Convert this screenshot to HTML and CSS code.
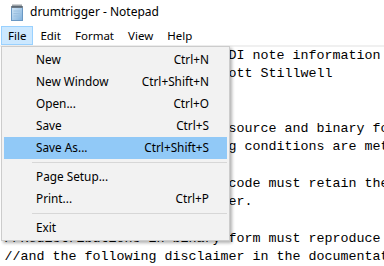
FILE: index.html
```html
<!DOCTYPE html>
<html>
<head>
<meta charset="utf-8">
<title>drumtrigger - Notepad</title>
<link rel="stylesheet" href="styles.css">
</head>
<body>
<div class="window">
  <div class="titlebar">
    <svg class="app-icon" width="14" height="17" viewBox="0 0 14 17">
      <defs>
        <linearGradient id="pg" x1="0" y1="0" x2="1" y2="1">
          <stop offset="0" stop-color="#d6e9f8"/>
          <stop offset="1" stop-color="#7fb0dc"/>
        </linearGradient>
      </defs>
      <rect x="1.5" y="2.5" width="11" height="14" fill="url(#pg)" stroke="#6a98c4"/>
      <line x1="3.5" y1="7" x2="10.5" y2="7" stroke="#9cc0e0"/>
      <line x1="3.5" y1="9.5" x2="10.5" y2="9.5" stroke="#9cc0e0"/>
      <line x1="3.5" y1="12" x2="10.5" y2="12" stroke="#9cc0e0"/>
      <rect x="1" y="2" width="12" height="2" fill="#7a8794"/>
      <g fill="none" stroke="#3f4a55" stroke-width="1">
        <path d="M3 0.5v3"/><path d="M5 0.5v3"/><path d="M7 0.5v3"/><path d="M9 0.5v3"/><path d="M11 0.5v3"/>
      </g>
    </svg>
    <span class="title">drumtrigger - Notepad</span>
  </div>
  <div class="menubar">
    <span class="mb-item active">File</span>
    <span class="mb-item">Edit</span>
    <span class="mb-item">Format</span>
    <span class="mb-item">View</span>
    <span class="mb-item">Help</span>
  </div>
  <div class="band"></div>
  <div class="editor">//Translates drum hits to MIDI note information
//Copyright (c) 2015-2017 Scott Stillwell


//Redistribution and use in source and binary forms, with or without
//provided that the following conditions are met:

//Redistributions of source code must retain the above copyright
//this list and the disclaimer.

//Redistributions in binary form must reproduce the above copyright
//and the following disclaimer in the documentation and/or other materials</div>

  <div class="dropdown">
    <div class="dd-item"><span>New</span><span>Ctrl+N</span></div>
    <div class="dd-item"><span>New Window</span><span>Ctrl+Shift+N</span></div>
    <div class="dd-item"><span>Open...</span><span>Ctrl+O</span></div>
    <div class="dd-item"><span>Save</span><span>Ctrl+S</span></div>
    <div class="dd-item selected"><span>Save As...</span><span>Ctrl+Shift+S</span></div>
    <div class="dd-sep"></div>
    <div class="dd-item"><span>Page Setup...</span><span></span></div>
    <div class="dd-item"><span>Print...</span><span>Ctrl+P</span></div>
    <div class="dd-sep"></div>
    <div class="dd-item"><span>Exit</span><span></span></div>
  </div>
</div>
</body>
</html>
```
FILE: styles.css
```css
html, body {
  margin: 0;
  padding: 0;
  background: #ffffff;
}
body {
  width: 384px;
  height: 266px;
  overflow: hidden;
  font-family: "Noto Sans", "Open Sans", sans-serif;
  font-size: 12px;
  color: #000;
}
.window {
  position: relative;
  width: 384px;
  height: 266px;
  overflow: hidden;
}
.titlebar {
  height: 26px;
  display: flex;
  align-items: center;
  padding-left: 10px;
  box-sizing: border-box;
}
.app-icon {
  display: block;
  margin-top: -2px;
}
.title {
  margin-left: 6px;
  font-size: 12px;
  margin-top: -3px;
}
.menubar {
  height: 19px;
  display: flex;
  align-items: stretch;
  padding-left: 1px;
  font-size: 11.5px;
}
.mb-item {
  display: flex;
  align-items: center;
  padding: 0 6px;
  border: 1px solid transparent;
  line-height: 1;
}
.mb-item.active {
  background: #cce8ff;
  border-color: #99d1ff;
}
.band {
  height: 2px;
  background: #f0f0f0;
}
.editor {
  white-space: pre;
  font-family: "Liberation Mono", "DejaVu Sans Mono", monospace;
  font-size: 13.33px;
  line-height: 18.3px;
  padding-left: 4.5px;
  color: #000;
}
.dropdown {
  position: absolute;
  left: 1px;
  top: 46px;
  width: 229px;
  box-sizing: border-box;
  background: #f2f2f2;
  border: 1px solid #cccccc;
  padding: 2px 2px 1px 2px;
  box-shadow: 2px 2px 3px rgba(0, 0, 0, 0.3);
  font-size: 11.8px;
}
.dd-item {
  height: 22px;
  display: flex;
  align-items: center;
  justify-content: space-between;
  padding: 0 18px 0 32px;
  line-height: 1;
}
.dd-item.selected {
  background: #91c9f7;
}
.dd-sep {
  height: 7px;
  display: flex;
  align-items: center;
  padding-left: 28px;
}
.dd-sep::after {
  content: "";
  display: block;
  height: 1px;
  width: 100%;
  background: #d7d7d7;
}
```
